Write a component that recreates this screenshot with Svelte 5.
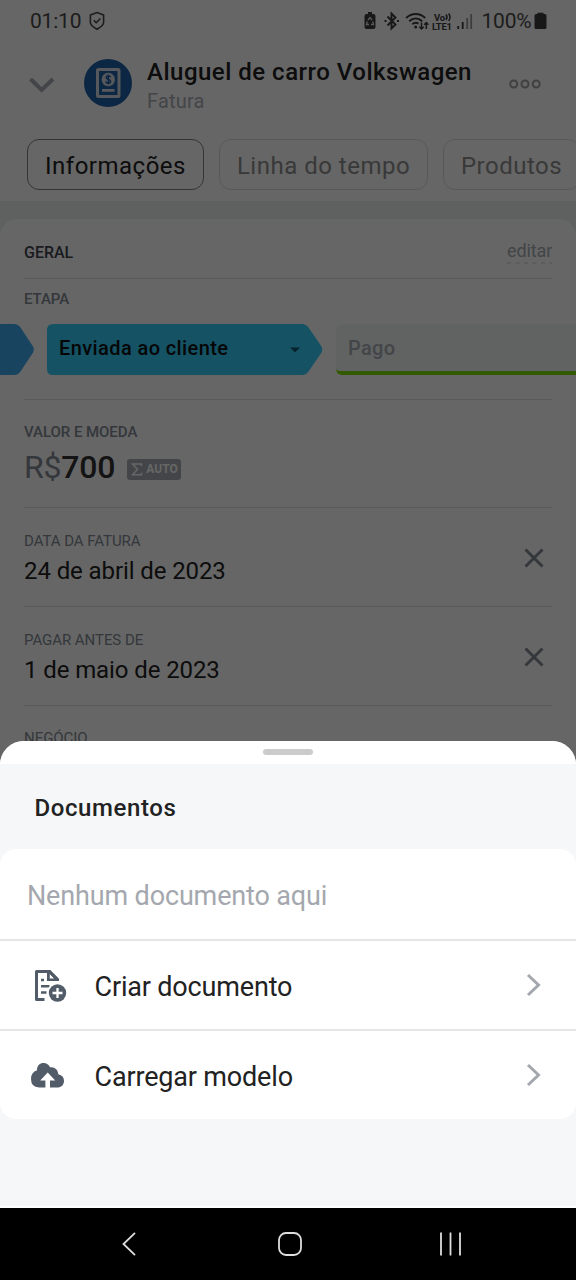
<script>
    const tabs = [
        { text: "Informações", active: true, width: 177 },
        { text: "Linha do tempo", active: false, width: 209 },
        { text: "Produtos", active: false, width: 137 },
    ];

    const dates = [
        { label: "DATA DA FATURA", value: "24 de abril de 2023" },
        { label: "PAGAR ANTES DE", value: "1 de maio de 2023" },
    ];

    const actions = [
        { icon: "create", text: "Criar documento" },
        { icon: "upload", text: "Carregar modelo" },
    ];
</script>

<div class="screen">
    <div class="page">
        <div class="status">
            <span class="clock">01:10</span>
            <svg class="shield" width="16" height="20" viewBox="0 0 16 20">
                <path d="M8 1.500 14.600 4v7.500c0 3-3.600 5-6.600 6.800-3-1.800-6.600-3.800-6.600-6.800V4z" />
                <path d="m4.800 9.400 2.400 2.400 4.200-4.300" />
            </svg>
            <svg class="signals" width="112" height="24" viewBox="0 0 112 24">
                <path class="solid" d="M4.500 4H6V2h4v2h1.500q2 0 2 2v11q0 2-2 2h-7q-2 0-2-2V6q0-2 2-2z" />
                <path class="cutout" d="M6 10 8 7.500l2 2.500M10.600 11.500l1 3H9M7 14.500H4.400l1-3" />
                <path class="line bluetooth" d="m25.500 6.500 8 8-4 4V3.500l4 4-8 8M22.500 11h2M35 11h2" />
                <path class="line wifi" d="M44.200 8c5.500-5.300 13.500-5.300 19 0M47.200 11.300c4-3.700 9-3.700 13 0M50.300 14.200c1.800-1.500 4.200-1.800 6.200-.6" />
                <circle class="solid" cx="53.700" cy="17" r="1.500" />
                <path class="line thin" d="M59.500 12.500V19m-2.200-2.200 2.200 2.200 2.200-2.200M64.300 19v-6.500M62.200 14.700l2.100-2.200 2.100 2.200" />
                <text x="72" y="11" textLength="11">Vo</text>
                <path class="line thin" d="M84 4.500q2 2.700 0 5.500M86.700 3.500q2.600 3.700 0 7.500" />
                <text x="70" y="20" textLength="20">LTE1</text>
                <path class="bar" d="M96.200 16v3M100.700 12v7" />
                <path class="bar weak" d="M105.200 8v11M109.200 4v15" />
            </svg>
            <span class="percent">100%</span>
            <svg class="battery" width="13" height="18" viewBox="0 0 13 18">
                <path d="M3.500 2V.8h6V2h1.300q1.700 0 1.700 1.700V15.500q0 1.500-1.500 1.500h-9Q.5 17 .5 15.500V3.700Q.5 2 2.200 2z" />
            </svg>
        </div>

        <header class="header">
            <svg class="collapse" width="26" height="17" viewBox="0 0 26 17">
                <path d="m1.500 2 11.200 11L24 2" />
            </svg>
            <svg class="avatar" width="48" height="48" viewBox="0 0 48 48">
                <circle cx="24" cy="24" r="24" fill="#1d61a8" />
                <rect x="13.500" y="10.500" width="21.500" height="27" rx="1" fill="none" stroke="#d6dce4" stroke-width="3" />
                <circle cx="24.300" cy="20.500" r="6.700" fill="#d6dce4" />
                <rect x="18" y="30" width="12.500" height="2.800" fill="#d6dce4" />
                <path d="M26.600 18.200q-.6-1.300-2.300-1.300-2.100 0-2.100 1.700c0 2.200 4.400 1.500 4.400 3.700 0 1.300-1 1.900-2.300 1.900-1.500 0-2.300-.7-2.600-1.700M24.300 15.500v10" fill="none" stroke="#1d61a8" stroke-width="1.500" />
            </svg>
            <div class="heading">
                <div class="title">Aluguel de carro Volkswagen</div>
                <div class="subtitle">Fatura</div>
            </div>
            <svg class="more" width="32" height="10" viewBox="0 0 32 10">
                <circle cx="4.700" cy="5" r="3.500" />
                <circle cx="16" cy="5" r="3.500" />
                <circle cx="27.200" cy="5" r="3.500" />
            </svg>
        </header>

        <nav class="tabs">
            {#each tabs as tab}
                <div class="tab" class:active={tab.active} style="width: {tab.width}px">{tab.text}</div>
            {/each}
        </nav>

        <main class="content">
            <section class="card">
                <div class="card-head">
                    <span class="general">GERAL</span>
                    <span class="edit">
                        editar
                        <svg width="45" height="2" viewBox="0 0 45 2"><path d="M0 1h45" /></svg>
                    </span>
                </div>

                <div class="stage-field">
                    <div class="label">ETAPA</div>
                    <div class="stages">
                        <svg class="previous" width="34" height="51" viewBox="0 0 34 51">
                            <path d="M0 0h14q4 0 6.500 3.500L33 22.500q1.500 3 0 6L20.500 47.500Q18 51 14 51H0z" />
                        </svg>
                        <div class="current">
                            <svg class="shape" width="276" height="51" viewBox="0 0 276 51">
                                <path d="M6 0h249q4 0 6.500 3.500L274.500 22.500q1.500 3 0 6l-13 19Q259 51 255 51H6q-6 0-6-6V6q0-6 6-6z" />
                            </svg>
                            <span>Enviada ao cliente</span>
                            <svg class="caret" width="10" height="6" viewBox="0 0 10 6"><path d="M0 .5h10l-5 5z" /></svg>
                        </div>
                        <div class="next">Pago</div>
                    </div>
                </div>

                <div class="field amount-field">
                    <div class="label medium">VALOR E MOEDA</div>
                    <div class="amount">
                        <span class="currency">R$</span><span class="number">700</span>
                        <span class="auto">
                            <svg width="12" height="13" viewBox="0 0 12 13"><path d="M10.500 3V1H1.500l5 5.500-5 5.300h9V9.800" /></svg>
                            AUTO
                        </span>
                    </div>
                </div>

                {#each dates as date}
                    <div class="field date-field">
                        <div>
                            <div class="label">{date.label}</div>
                            <div class="date">{date.value}</div>
                        </div>
                        <svg width="20" height="20" viewBox="0 0 20 20"><path d="m1.500 1.500 17 17m0-17-17 17" /></svg>
                    </div>
                {/each}

                <div class="field">
                    <div class="label">NEGÓCIO</div>
                </div>
            </section>
        </main>
    </div>

    <div class="overlay"></div>

    <div class="sheet">
        <div class="grip"><span></span></div>
        <h2>Documentos</h2>
        <div class="list">
            <div class="empty">Nenhum documento aqui</div>
            {#each actions as action}
                <div class="action">
                    {#if action.icon === "create"}
                        <svg class="icon" width="38" height="34" viewBox="0 0 38 34">
                            <path d="M15.500 30.500H7.500V2.500h13l8 8.500" fill="none" stroke="#525c69" stroke-width="3" stroke-linejoin="round" />
                            <path d="M18 1h3.200L30 9.800V12H18zM20.800 5v4.500h4.500z" fill="#525c69" fill-rule="evenodd" />
                            <path d="M12 11h3M12 17.300h8.500M12 23.500h5.500" fill="none" stroke="#525c69" stroke-width="2.600" />
                            <circle cx="28.500" cy="24" r="10.300" fill="#ffffff" />
                            <circle cx="28.500" cy="24" r="8.700" fill="#525c69" />
                            <path d="M23.500 24h10M28.500 19v10" stroke="#ffffff" stroke-width="2.300" />
                        </svg>
                    {:else}
                        <svg class="icon" width="38" height="34" viewBox="0 0 38 34">
                            <path d="M10 28.500q-8-.4-8-8.500 0-6.800 6-8.700C8 6.200 11 4 14.500 4c3 0 5.500 1.600 6.500 4.300 4.600-.8 8 2.200 8.300 7 3.800.8 5.700 3.200 5.700 6.400 0 4.200-2.700 6.800-7 6.800z" fill="#525c69" />
                            <path d="m18.700 13.500 7.500 8h-5.200V29h-4.600v-7.500h-5.200z" fill="#ffffff" />
                        </svg>
                    {/if}
                    <span>{action.text}</span>
                    <svg class="chevron" width="16" height="24" viewBox="0 0 16 24"><path d="m2 2 10.500 10L2 22" /></svg>
                </div>
            {/each}
        </div>
    </div>

    <div class="navbar">
        <svg width="16" height="26" viewBox="0 0 16 26"><path d="M14 1.800 2.500 13 14 24.200" /></svg>
        <svg class="home" width="26" height="26" viewBox="0 0 26 26"><rect x="2" y="2" width="22" height="22" rx="7" /></svg>
        <svg width="26" height="26" viewBox="0 0 26 26"><path d="M3 1.500v23M12.500 1.500v23M22 1.500v23" /></svg>
    </div>
</div>

<style>
    :global(body) {
        margin: 0;
    }

    .screen {
        position: relative;
        width: 576px;
        height: 1280px;
        overflow: hidden;
        display: flex;
        flex-direction: column;
        background: #ffffff;
        font-family: Roboto, sans-serif;
    }

    .screen * {
        box-sizing: border-box;
    }

    svg {
        display: block;
        flex-shrink: 0;
    }

    .page {
        height: 1208px;
    }

    .status {
        display: flex;
        align-items: center;
        height: 42px;
        padding: 0 29px;
        color: #4a4a4a;
        font-size: 21px;
    }

    .clock {
        width: 61px;
        letter-spacing: -0.2px;
        padding-left: 1px;
    }

    .shield {
        fill: none;
        stroke: #4a4a4a;
        stroke-width: 1.6;
        stroke-linejoin: round;
    }

    .signals {
        margin: 1px 0 0 257px;
        fill: none;
        stroke: #3c3c3c;
        stroke-width: 1.6;
    }

    .signals .solid {
        fill: #3c3c3c;
        stroke: none;
    }

    .signals .cutout {
        stroke: #dddddd;
        stroke-width: 1.3;
    }

    .signals .bluetooth {
        stroke-width: 1.9;
    }

    .signals .wifi {
        stroke-width: 2;
    }

    .signals .thin {
        stroke-width: 1.5;
    }

    .signals .bar {
        stroke-width: 1.8;
    }

    .signals .weak {
        stroke: #9a9a9a;
    }

    .signals text {
        fill: #3c3c3c;
        stroke: none;
        font-size: 9.5px;
        font-weight: 700;
    }

    .percent {
        width: 52px;
        margin-left: 7px;
        letter-spacing: -0.2px;
    }

    .battery {
        margin-left: 1px;
        fill: #3c3c3c;
    }

    .header {
        display: flex;
        height: 97px;
        padding: 17px 0 0 29px;
    }

    .collapse {
        margin-top: 18px;
        fill: none;
        stroke: #a8adb4;
        stroke-width: 4;
    }

    .avatar {
        margin-left: 29px;
    }

    .heading {
        width: 362px;
        margin-left: 15px;
    }

    .title {
        margin-top: -2px;
        color: #222222;
        font-size: 24px;
        font-weight: 500;
        line-height: 30px;
        letter-spacing: 0.5px;
        white-space: nowrap;
    }

    .subtitle {
        margin-top: 2px;
        color: #a8adb4;
        font-size: 20px;
        line-height: 24px;
        letter-spacing: 0.2px;
    }

    .more {
        margin-top: 20px;
        fill: none;
        stroke: #a0a0a0;
        stroke-width: 2;
    }

    .tabs {
        display: flex;
        gap: 15px;
        height: 62px;
        padding-left: 27px;
    }

    .tab {
        flex-shrink: 0;
        height: 51px;
        border: 1.5px solid #dddddd;
        border-radius: 12px;
        color: #8e8e8e;
        font-size: 24px;
        line-height: 52px;
        letter-spacing: 0.5px;
        text-align: center;
        white-space: nowrap;
    }

    .tab.active {
        border-color: #828282;
        color: #222222;
    }

    .content {
        height: 1007px;
        padding-top: 18px;
        background: #edf3f2;
    }

    .card {
        height: 989px;
        border-radius: 18px;
        background: #ffffff;
    }

    .card-head {
        display: flex;
        justify-content: space-between;
        height: 60px;
        margin: 0 24px;
        border-bottom: 1px solid #e2e4e7;
    }

    .general {
        padding-top: 24px;
        color: #40454f;
        font-size: 16px;
        font-weight: 500;
        line-height: 20px;
    }

    .edit {
        width: 45px;
        padding-top: 20px;
        color: #a8adb4;
        font-size: 18px;
        line-height: 24px;
        letter-spacing: -0.1px;
    }

    .edit svg {
        margin-top: -1px;
        stroke: #d0d0d0;
        stroke-width: 1.2;
        stroke-dasharray: 4 4.5;
    }

    .label {
        color: #828b95;
        font-size: 15px;
        line-height: 20px;
        letter-spacing: -0.05px;
    }

    .label.medium {
        font-weight: 500;
    }

    .stage-field {
        height: 120px;
        padding-top: 10px;
    }

    .stage-field .label {
        margin-left: 24px;
        font-weight: 500;
    }

    .stages {
        display: flex;
        gap: 13px;
        margin-top: 15px;
        overflow: hidden;
        font-size: 20px;
        font-weight: 500;
        line-height: 49px;
    }

    .previous {
        fill: #3fabf0;
    }

    .current {
        position: relative;
        display: flex;
        align-items: center;
        justify-content: space-between;
        flex-shrink: 0;
        width: 276px;
        height: 51px;
        padding: 0 23px 0 12px;
        color: #111111;
    }

    .current span {
        position: relative;
        padding-bottom: 2px;
        line-height: 47px;
        letter-spacing: 0.4px;
    }

    .shape {
        position: absolute;
        inset: 0;
        fill: #32cdfa;
    }

    .caret {
        position: relative;
        fill: #125872;
    }

    .next {
        flex-shrink: 0;
        width: 276px;
        height: 51px;
        padding-left: 12px;
        border-bottom: 4px solid #7ee000;
        border-radius: 6px;
        background: #f3f8f7;
        color: #a8adb4;
        letter-spacing: 0.3px;
    }

    .field {
        margin: 0 24px;
        padding-top: 22px;
        border-top: 1px solid #e2e4e7;
    }

    .amount-field {
        height: 108px;
    }

    .amount {
        display: flex;
        align-items: center;
        height: 50px;
        font-size: 32px;
        line-height: 50px;
        letter-spacing: -0.2px;
    }

    .currency {
        color: #828b95;
    }

    .number {
        color: #333333;
        font-weight: 500;
    }

    .auto {
        display: flex;
        align-items: center;
        gap: 3px;
        height: 21px;
        margin: 4px 0 0 12px;
        padding: 0 3px 0 4px;
        border-radius: 3px;
        background: #a8adb4;
        color: #ffffff;
        font-size: 12px;
        font-weight: 700;
        line-height: 23px;
        letter-spacing: 0;
    }

    .auto svg {
        fill: none;
        stroke: #ffffff;
        stroke-width: 1.5;
    }

    .date-field {
        display: flex;
        justify-content: space-between;
        height: 99px;
        padding-top: 23px;
        padding-right: 8.5px;
    }

    .date {
        margin-top: 5px;
        color: #222222;
        font-size: 24px;
        line-height: 30px;
        letter-spacing: -0.1px;
    }

    .date-field svg {
        margin-top: 17px;
        fill: none;
        stroke: #828b95;
        stroke-width: 3;
    }

    /* dims the page behind the sheet */
    .overlay {
        position: absolute;
        inset: 0;
        background: rgba(0, 0, 0, 0.6);
    }

    .sheet {
        position: absolute;
        top: 741px;
        left: 0;
        width: 576px;
        height: 467px;
        border-bottom: 2px solid #ffffff;
        border-radius: 24px 24px 0 0;
        overflow: hidden;
        background: #f5f7f9;
    }

    .grip {
        height: 23px;
        padding-top: 8px;
        background: #ffffff;
    }

    .grip span {
        display: block;
        width: 50px;
        height: 6px;
        margin: 0 auto;
        border-radius: 3px;
        background: #cccccc;
    }

    h2 {
        height: 85px;
        margin: 0;
        padding-left: 34.5px;
        color: #222222;
        font-size: 24px;
        font-weight: 500;
        line-height: 89px;
        letter-spacing: 0.6px;
    }

    .list {
        border-radius: 16px;
        background: #ffffff;
    }

    .empty {
        height: 90px;
        padding-left: 27px;
        color: #a4a8ae;
        font-size: 27px;
        line-height: 95px;
        letter-spacing: -0.15px;
    }

    .action {
        display: flex;
        align-items: center;
        height: 90px;
        padding: 0 34px 0 29px;
        border-top: 2px solid #e4e5e7;
        color: #222222;
        font-size: 27px;
        letter-spacing: -0.17px;
    }

    .icon {
        margin-top: 2px;
    }

    .action span {
        flex-grow: 1;
        margin-left: 27.5px;
        padding-top: 4px;
    }

    .chevron {
        fill: none;
        stroke: #a4a8ae;
        stroke-width: 3;
    }

    .navbar {
        position: relative;
        display: flex;
        align-items: center;
        justify-content: space-between;
        height: 72px;
        padding: 0 112px 0 121px;
        background: #000000;
    }

    .navbar svg {
        fill: none;
        stroke: #dddddd;
        stroke-width: 1.8;
    }

    .navbar .home {
        margin-left: 4px;
    }
</style>
